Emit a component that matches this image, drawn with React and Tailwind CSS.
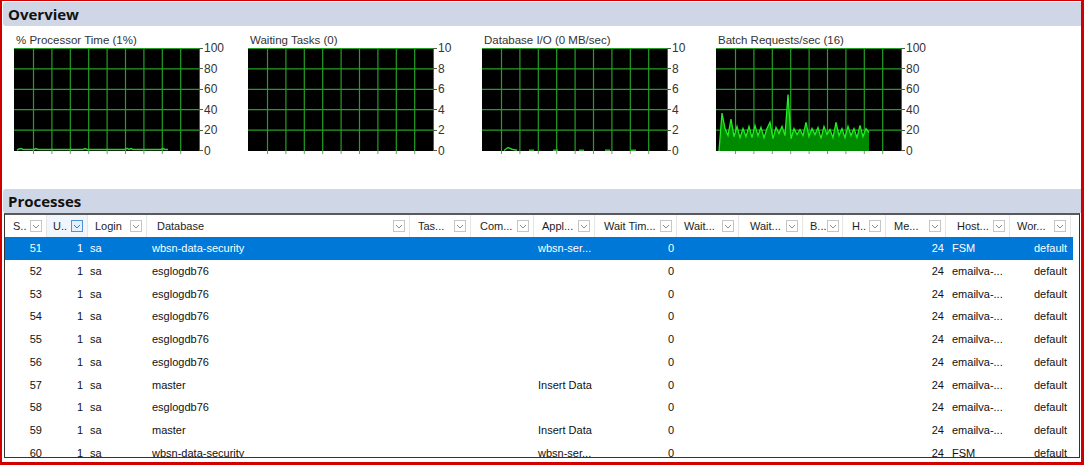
import React from "react";

const cols = [
  { h: "S..", w: "w-[42px]", hp: "pl-[8px]", dc: "justify-end pr-[5px]" },
  { h: "U..", w: "w-[41px]", hp: "pl-[6px]", dc: "justify-end pr-[5px]", active: true },
  { h: "Login", w: "w-[59px]", hp: "pl-[7px]", dc: "pl-[2px]" },
  { h: "Database", w: "w-[263px]", hp: "pl-[10px]", dc: "pl-[5px]" },
  { h: "Tas...", w: "w-[61px]", hp: "pl-[8px]", dc: "pl-[4px]" },
  { h: "Com...", w: "w-[63px]", hp: "pl-[9px]", dc: "pl-[4px]" },
  { h: "Appl...", w: "w-[61px]", hp: "pl-[8px]", dc: "pl-[4px]" },
  { h: "Wait Tim...", w: "w-[82px]", hp: "pl-[9px]", dc: "justify-end pr-[3px]" },
  { h: "Wait...", w: "w-[62px]", hp: "pl-[7px]", dc: "pl-[4px]" },
  { h: "Wait...", w: "w-[64px]", hp: "pl-[11px]", dc: "pl-[4px]" },
  { h: "B...", w: "w-[40px]", hp: "pl-[7px]", dc: "pl-[4px]" },
  { h: "H..", w: "w-[43px]", hp: "pl-[9px]", dc: "pl-[4px]" },
  { h: "Me...", w: "w-[60px]", hp: "pl-[8px]", dc: "justify-end pr-[2px]" },
  { h: "Host...", w: "w-[64px]", hp: "pl-[11px]", dc: "pl-[6px]" },
  { h: "Wor...", w: "w-[61px]", hp: "pl-[7px]", dc: "justify-end pr-[4px]" },
];

const mk = (id, db, app, host) => [id, "1", "sa", db, "", "", app, "0", "", "", "", "", "24", host, "default"];
const rows = [
  mk("51", "wbsn-data-security", "wbsn-ser...", "FSM"),
  mk("52", "esglogdb76", "", "emailva-..."),
  mk("53", "esglogdb76", "", "emailva-..."),
  mk("54", "esglogdb76", "", "emailva-..."),
  mk("55", "esglogdb76", "", "emailva-..."),
  mk("56", "esglogdb76", "", "emailva-..."),
  mk("57", "master", "Insert Data", "emailva-..."),
  mk("58", "esglogdb76", "", "emailva-..."),
  mk("59", "master", "Insert Data", "emailva-..."),
  mk("60", "wbsn-data-security", "wbsn-ser...", "FSM"),
];

const batch = [0, 37, 22, 15, 31, 14, 24, 13, 22, 14, 24, 13, 25, 15, 23, 13, 22, 28, 12, 23, 17, 24, 15, 55, 12, 22, 16, 21, 15, 28, 14, 22, 16, 23, 12, 24, 16, 21, 13, 28, 15, 22, 13, 24, 15, 22, 13, 25, 14, 22, 18];

function DropIcon({ active }) {
  return (
    <svg width="12" height="12" viewBox="0 0 12 12" className="shrink-0">
      <rect x="0.5" y="0.5" width="11" height="11" fill={active ? "#e3effb" : "#ffffff"} stroke={active ? "#4f92d6" : "#c6c6c6"} />
      <path d="M3 5 L6 8 L9 5" fill="none" stroke={active ? "#3a78c2" : "#8c8c8c"} strokeWidth="1" />
    </svg>
  );
}

function Chart({ title, labels, children }) {
  const vx = [19.5, 37.9, 56.3, 74.7, 93.1, 111.5, 129.9, 148.3, 166.7];
  const hy = [0.5, 20.9, 41.3, 61.7, 82.1];
  return (
    <div className="w-[234px] shrink-0 flex flex-col">
      <div className="h-[15px] pl-[2px] text-[11.5px] leading-[15px] text-[#333] whitespace-nowrap">{title}</div>
      <div className="flex items-start">
        <svg width="186" height="106" viewBox="0 0 186 106" className="shrink-0">
          <rect x="0" y="0" width="186" height="103" fill="#000" />
          {hy.map((y) => (
            <line key={"h" + y} x1="0" x2="186" y1={y} y2={y} stroke="#24a024" strokeWidth="1.2" />
          ))}
          {vx.map((x) => (
            <line key={"v" + x} x1={x} x2={x} y1="0" y2="103" stroke="#24a024" strokeWidth="1.2" />
          ))}
          <line x1="185.5" x2="185.5" y1="0" y2="103" stroke="#2a7a2a" strokeWidth="1" />
          {vx.map((x) => (
            <line key={"t" + x} x1={x} x2={x} y1="103" y2="106" stroke="#8a8a8a" strokeWidth="1" />
          ))}
          {children}
        </svg>
        <div className="h-[115px] -mt-[6px] flex flex-col justify-between">
          {labels.map((l) => (
            <div key={l} className="flex items-center h-[12px]">
              <span className="w-[3px] h-px bg-[#555]" />
              <span className="pl-[1px] text-[12px] leading-[12px] text-[#333]">{l}</span>
            </div>
          ))}
        </div>
      </div>
    </div>
  );
}

export default function App() {
  const pts = batch.map((v, i) => `${3 + i * 3},${(103 - v * 1.025).toFixed(1)}`).join(" ");
  const l100 = ["100", "80", "60", "40", "20", "0"];
  const l10 = ["10", "8", "6", "4", "2", "0"];
  return (
    <div className="w-[1084px] h-[465px] bg-white border-[#d10000] border-t border-l-2 border-r-[3px] border-b-[3px] flex flex-col overflow-hidden font-['Liberation_Sans',Arial,sans-serif]">
      <div className="mt-[1px] ml-[1px] h-[24px] shrink-0 bg-[#cfd6e5] rounded-l-[3px] flex items-center pl-[5px] font-['Open_Sans',sans-serif] font-bold text-[15px] text-[#111]">
        Overview
      </div>
      <div className="h-[163px] shrink-0 pt-[7px] pl-[12px] flex">
        <Chart title="% Processor Time (1%)" labels={l100}>
          <polyline
            points="3,102 5,101 7,100.5 9,101.5 20,101.5 22,100.5 24,101.5 69,101.5 71,100.5 73,101.5 111,101.5 113,100.3 115,101.5 117,100.5 119,101.5 147,101.5 149,100.5 151,101.5 154,101.5"
            fill="none"
            stroke="#2ed02e"
            strokeWidth="1.5"
          />
        </Chart>
        <Chart title="Waiting Tasks (0)" labels={l10} />
        <Chart title="Database I/O (0 MB/sec)" labels={l10}>
          <polyline points="22,102.5 26,99.5 30,101.2 35,102.3" fill="none" stroke="#2ed02e" strokeWidth="1.5" />
          {[47, 71, 97, 123, 149].map((x) => (
            <line key={x} x1={x} x2={x + 5} y1="102.2" y2="102.2" stroke="#2ed02e" strokeWidth="1.3" />
          ))}
        </Chart>
        <Chart title="Batch Requests/sec (16)" labels={l100}>
          <polygon points={`3,103 ${pts} 153,103`} fill="#008a00" />
          <polyline points={pts} fill="none" stroke="#22ee22" strokeWidth="1.3" />
        </Chart>
      </div>
      <div className="ml-[1px] h-[24px] shrink-0 bg-[#cfd6e5] rounded-l-[3px] flex items-center pl-[5px] font-['Open_Sans',sans-serif] font-bold text-[15px] text-[#111]">
        Processes
      </div>
      <div className="ml-[2px] mr-[1px] h-[245px] shrink-0 border border-[#333] border-t-2 border-t-[#5a5a5a] overflow-hidden bg-white">
        <div className="flex h-[22px] w-[1068px] text-[11px] text-[#1e1e1e]">
          {cols.map((c, i) => (
            <div
              key={i}
              className={`${c.w} ${c.hp} shrink-0 h-full flex items-center border-r border-[#e6e6e6] ${c.active ? "bg-[#f0f6fc]" : ""}`}
            >
              <span className="whitespace-nowrap">{c.h}</span>
              <span className="ml-auto mr-[4px] flex">
                <DropIcon active={c.active} />
              </span>
            </div>
          ))}
        </div>
        {rows.map((r, ri) => (
          <div
            key={ri}
            className={`flex h-[22.75px] w-[1068px] text-[11px] ${ri === 0 ? "bg-[#0078d7] text-white" : "text-[#111]"}`}
          >
            {r.map((v, ci) => (
              <div key={ci} className={`${cols[ci].w} ${cols[ci].dc} shrink-0 h-full flex items-center whitespace-nowrap overflow-hidden`}>
                {v}
              </div>
            ))}
          </div>
        ))}
      </div>
    </div>
  );
}
